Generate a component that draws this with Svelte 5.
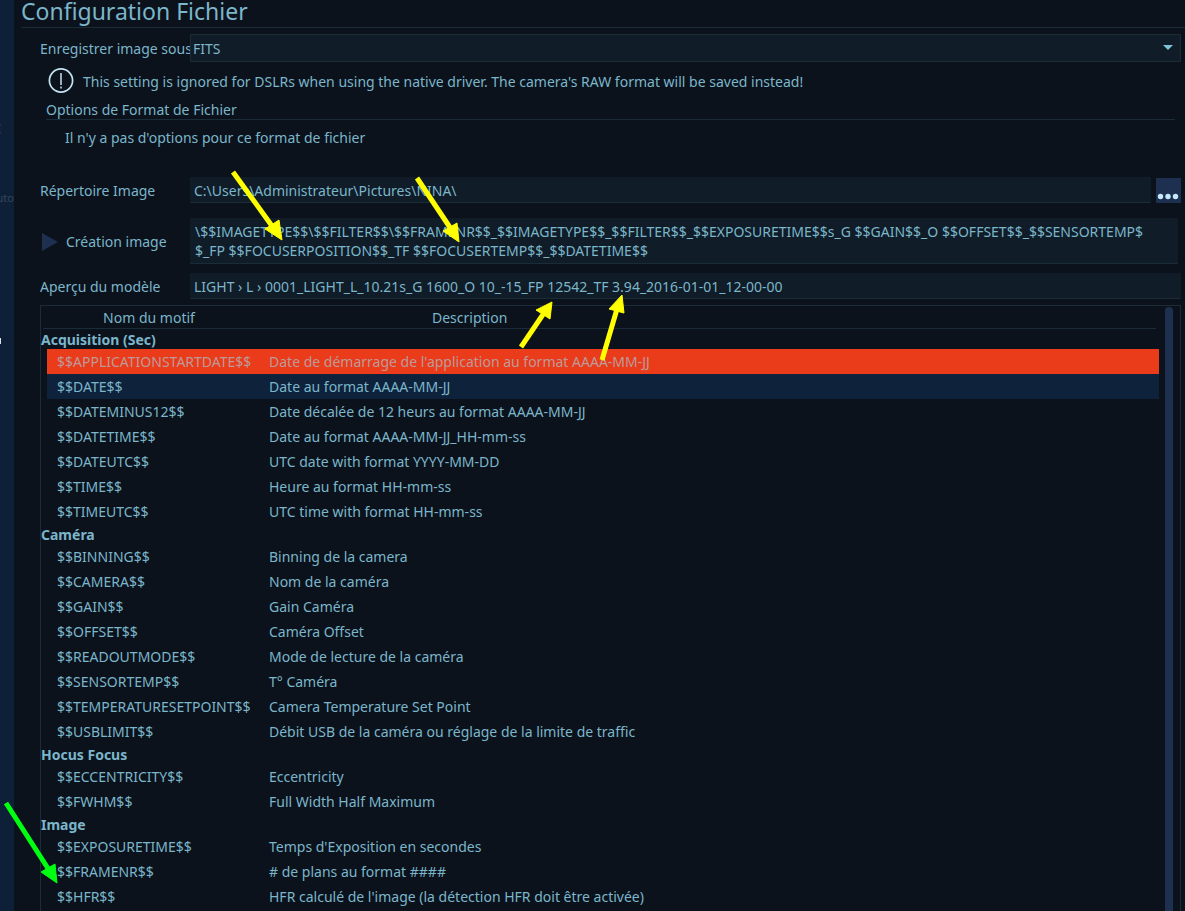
<script lang="ts">
	interface Pattern {
		key: string;
		description: string;
	}

	interface Group {
		name: string;
		patterns: Pattern[];
	}

	const groups: Group[] = [
		{
			name: 'Acquisition (Sec)',
			patterns: [
				{
					key: '$$APPLICATIONSTARTDATE$$',
					description: "Date de démarrage de l'application au format AAAA-MM-JJ"
				},
				{ key: '$$DATE$$', description: 'Date au format AAAA-MM-JJ' },
				{ key: '$$DATEMINUS12$$', description: 'Date décalée de 12 heurs au format AAAA-MM-JJ' },
				{ key: '$$DATETIME$$', description: 'Date au format AAAA-MM-JJ_HH-mm-ss' },
				{ key: '$$DATEUTC$$', description: 'UTC date with format YYYY-MM-DD' },
				{ key: '$$TIME$$', description: 'Heure au format HH-mm-ss' },
				{ key: '$$TIMEUTC$$', description: 'UTC time with format HH-mm-ss' }
			]
		},
		{
			name: 'Caméra',
			patterns: [
				{ key: '$$BINNING$$', description: 'Binning de la camera' },
				{ key: '$$CAMERA$$', description: 'Nom de la caméra' },
				{ key: '$$GAIN$$', description: 'Gain Caméra' },
				{ key: '$$OFFSET$$', description: 'Caméra Offset' },
				{ key: '$$READOUTMODE$$', description: 'Mode de lecture de la caméra' },
				{ key: '$$SENSORTEMP$$', description: 'T° Caméra' },
				{ key: '$$TEMPERATURESETPOINT$$', description: 'Camera Temperature Set Point' },
				{
					key: '$$USBLIMIT$$',
					description: 'Débit USB de la caméra ou réglage de la limite de traffic'
				}
			]
		},
		{
			name: 'Hocus Focus',
			patterns: [
				{ key: '$$ECCENTRICITY$$', description: 'Eccentricity' },
				{ key: '$$FWHM$$', description: 'Full Width Half Maximum' }
			]
		},
		{
			name: 'Image',
			patterns: [
				{ key: '$$EXPOSURETIME$$', description: "Temps d'Exposition en secondes" },
				{ key: '$$FRAMENR$$', description: '# de plans au format ####' },
				{
					key: '$$HFR$$',
					description: "HFR calculé de l'image (la détection HFR doit être activée)"
				}
			]
		}
	];

	let format = $state('FITS');
	let directory = $state('C:\\Users\\Administrateur\\Pictures\\NINA\\');
	let template = $state(
		'\\$$IMAGETYPE$$\\$$FILTER$$\\$$FRAMENR$$_$$IMAGETYPE$$_$$FILTER$$_$$EXPOSURETIME$$s_G $$GAIN$$_O $$OFFSET$$_$$SENSORTEMP$$_FP $$FOCUSERPOSITION$$_TF $$FOCUSERTEMP$$_$$DATETIME$$'
	);
	let preview = 'LIGHT › L › 0001_LIGHT_L_10.21s_G 1600_O 10_-15_FP 12542_TF 3.94_2016-01-01_12-00-00';

	let hovered = $state('$$APPLICATIONSTARTDATE$$');
	let selected = $state('$$DATE$$');
</script>

<div class="page">
	<nav class="rail">
		<span class="rail-item first">(</span>
		<span class="rail-item">uto</span>
		<span class="rail-mark"></span>
	</nav>

	<main>
		<h1>Configuration Fichier</h1>

		<div class="form">
			<div class="row">
				<label for="format">Enregistrer image sous</label>
				<div class="select-wrap">
					<select id="format" bind:value={format}>
						<option>FITS</option>
						<option>XISF</option>
						<option>TIFF</option>
					</select>
					<svg class="caret" viewBox="0 0 10 5"><path d="M0 0h10L5 5z" /></svg>
				</div>
			</div>

			<div class="warning">
				<svg viewBox="0 0 26 26">
					<circle cx="13" cy="12.5" r="11.6" />
					<path class="bang" d="M13 5v12M13 18.500v2" />
				</svg>
				<p>
					This setting is ignored for DSLRs when using the native driver. The camera's RAW format will
					be saved instead!
				</p>
			</div>

			<section class="options">
				<h2>Options de Format de Fichier</h2>
				<p>Il n'y a pas d'options pour ce format de fichier</p>
			</section>

			<div class="row directory">
				<label for="directory">Répertoire Image</label>
				<input id="directory" type="text" bind:value={directory} />
				<button type="button" class="browse" aria-label="Parcourir">
					<svg viewBox="0 0 25 25">
						<circle cx="4.500" cy="18.500" r="2.700" />
						<circle cx="12" cy="18.500" r="2.700" />
						<circle cx="19.500" cy="18.500" r="2.700" />
					</svg>
				</button>
			</div>

			<div class="row template">
				<label for="template">
					<svg viewBox="0 0 16 18"><path d="M0 0l16 9L0 18z" /></svg>
					Création image
				</label>
				<textarea id="template" rows="2" spellcheck="false" bind:value={template}></textarea>
			</div>

			<div class="row preview">
				<label for="preview">Aperçu du modèle</label>
				<input id="preview" type="text" readonly value={preview} />
			</div>

			<div class="patterns">
				<table>
					<thead>
						<tr>
							<th>Nom du motif</th>
							<th>Description</th>
						</tr>
					</thead>
					{#each groups as group (group.name)}
						<tbody>
							<tr class="group">
								<th colspan="2">{group.name}</th>
							</tr>
							{#each group.patterns as pattern (pattern.key)}
								<tr
									class="pattern"
									class:hovered={hovered === pattern.key}
									class:selected={selected === pattern.key}
									onmouseenter={() => (hovered = pattern.key)}
									onclick={() => (selected = pattern.key)}
								>
									<td>{pattern.key}</td>
									<td>{pattern.description}</td>
								</tr>
							{/each}
						</tbody>
					{/each}
				</table>
				<div class="scrollbar"></div>
			</div>
		</div>
	</main>

	<!-- Callout arrows drawn over the form -->
	<svg class="arrows">
		<g class="yellow">
			<path class="shaft" d="M233 172L272 226" />
			<path d="M282 240L265 229L279 220Z" />
			<path class="shaft" d="M417 178L451 229" />
			<path d="M459 242L443 231L457 223Z" />
			<path class="shaft" d="M521 347L544 313" />
			<path d="M552 302L550 319L536 310Z" />
			<path class="shaft" d="M602 360L617 309" />
			<path d="M622 295L624 313L609 309Z" />
		</g>
		<g class="green">
			<path class="shaft" d="M6 803L49 870" />
			<path d="M57 883L41 872L55 864Z" />
		</g>
	</svg>
</div>

<style>
	:global(body) {
		background: #0b121c;
	}

	.page {
		--text: #7bb6ca;
		--line: #1b2c39;
		--field: #101c27;
		--accent: #1d3050;

		position: relative;
		display: flex;
		min-height: 100vh;
		overflow: hidden;
		background: #0b121c;
		color: var(--text);
		font-family: 'Noto Sans', 'Open Sans', sans-serif;
		font-size: 14px;
		line-height: 20px;
	}

	h1,
	h2,
	p {
		margin: 0;
		font-size: inherit;
		font-weight: 400;
	}

	.rail {
		display: flex;
		flex: none;
		flex-direction: column;
		align-items: flex-end;
		width: 14px;
		overflow: hidden;
		background: #0e2038;
		color: #34465e;
		font-size: 11px;
	}

	.rail-item.first {
		align-self: flex-start;
		margin: 118px 0 50px -2px;
	}

	.rail-mark {
		align-self: flex-start;
		width: 1px;
		height: 6px;
		margin-top: 130px;
		background: #d5e4ee;
	}

	main {
		display: flex;
		flex: 1;
		flex-direction: column;
		min-width: 0;
		padding-left: 7px;
	}

	h1 {
		height: 27px;
		border-bottom: 1px solid var(--line);
		font-size: 23px;
		line-height: 22px;
	}

	.form {
		display: flex;
		flex: 1;
		flex-direction: column;
		padding: 6px 4px 0 19px;
	}

	.row {
		display: flex;
		align-items: center;
	}

	label {
		display: flex;
		flex: none;
		align-items: center;
		width: 150px;
		padding-top: 2px;
		white-space: nowrap;
	}

	select,
	input,
	textarea {
		box-sizing: border-box;
		flex: 1;
		min-width: 0;
		margin: 0;
		border: 1px solid var(--field);
		border-bottom-color: var(--line);
		border-radius: 0;
		outline: none;
		background: var(--field);
		color: inherit;
		font: inherit;
	}

	input {
		height: 26px;
		padding: 0 3px;
	}

	.select-wrap {
		position: relative;
		display: flex;
		flex: 1;
	}

	select {
		height: 28px;
		padding: 2px 2px 0;
		border-color: var(--line);
		appearance: none;
	}

	.caret {
		position: absolute;
		top: 11px;
		right: 8px;
		width: 10px;
		height: 5px;
		fill: #7cc4d8;
		pointer-events: none;
	}

	.warning {
		display: flex;
		align-items: center;
		gap: 9px;
		height: 38px;
		padding-left: 8px;
	}

	.warning svg {
		width: 26px;
		height: 26px;
		fill: none;
		stroke: #c4e4f2;
		stroke-width: 1.700;
	}

	.warning .bang {
		stroke-width: 1.500;
	}

	.warning p {
		padding-top: 2px;
	}

	.options {
		padding: 0 6px;
	}

	.options h2 {
		border-bottom: 1px solid var(--line);
		line-height: 19px;
	}

	.options p {
		padding: 8px 19px;
	}

	.directory {
		margin-top: 21px;
	}

	.browse {
		width: 25px;
		height: 25px;
		margin-left: 5px;
		padding: 0;
		border: 0;
		background: var(--accent);
	}

	.browse svg {
		display: block;
		fill: #c4e9fb;
	}

	.template {
		margin-top: 15px;
		padding-right: 3px;
	}

	.template svg {
		width: 16px;
		height: 18px;
		margin: 0 8px 0 2px;
		fill: var(--accent);
	}

	textarea {
		display: block;
		height: 46px;
		padding: 3px 30px 3px 4px;
		line-height: 19px;
		overflow: hidden;
		resize: none;
		line-break: anywhere;
	}

	.preview {
		margin-top: 9px;
	}

	.patterns {
		display: flex;
		flex: 1;
		margin-top: 6px;
		border: 1px solid var(--line);
		border-bottom: 0;
	}

	table,
	tbody,
	thead {
		display: block;
	}

	table {
		flex: 1;
	}

	tr {
		display: grid;
		grid-template-columns: 212px 1fr;
	}

	th,
	td {
		padding: 0;
		font-weight: 400;
		text-align: left;
	}

	thead tr {
		margin: 0 3px 0 2px;
		padding-top: 2px;
		border-bottom: 1px solid var(--line);
	}

	thead th:first-child {
		text-align: center;
	}

	thead th:last-child {
		padding-left: 177px;
	}

	.group {
		display: block;
		padding-top: 2px;
		line-height: 18px;
	}

	.group th {
		display: block;
		font-weight: 700;
	}

	.pattern {
		margin-left: 6px;
		padding-left: 10px;
		line-height: 25px;
		cursor: pointer;
	}

	.selected {
		background: #0f223c;
	}

	.hovered {
		background: #ea3b1b;
		color: #bd9a97;
	}

	.scrollbar {
		width: 8px;
		margin: 1px 7px 0 6px;
		border-radius: 4px 4px 0 0;
		background: var(--accent);
	}

	.arrows {
		position: absolute;
		inset: 0;
		width: 100%;
		height: 100%;
		pointer-events: none;
	}

	.shaft {
		fill: none;
		stroke-width: 5;
	}

	.yellow {
		fill: #ff0;
		stroke: #ff0;
	}

	.green {
		fill: #0f1;
		stroke: #0f1;
	}
</style>
